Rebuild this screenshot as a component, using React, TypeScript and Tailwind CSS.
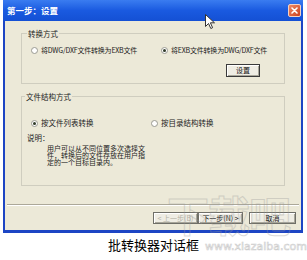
import React from "react";

const cjk = { fontFamily: '"Noto Sans CJK SC", "Noto Sans", sans-serif' };

function Radio({ checked }: { checked?: boolean }) {
  return (
    <span className="flex h-[7px] w-[7px] shrink-0 items-center justify-center rounded-full border border-[#9a9a92] bg-white">
      {checked && <span className="h-[3px] w-[3px] rounded-full bg-[#2f3a28]" />}
    </span>
  );
}

function Btn({ children, w, disabled, bold }: { children: React.ReactNode; w: string; disabled?: boolean; bold?: boolean }) {
  return (
    <div
      className={`flex items-center justify-center whitespace-nowrap border ${bold ? "border-[#3a3a3a]" : "border-[#6f6f68]"} bg-[#efede4] text-[7px] leading-none ${disabled ? "text-[#b4b2a6]" : "text-[#111]"} shadow-[inset_1px_1px_0_#ffffff,inset_-1px_-1px_0_#a8a69a] ${w}`}
    >
      {children}
    </div>
  );
}

export default function App() {
  return (
    <div className="relative h-[260px] w-[307px] overflow-hidden bg-white" style={cjk}>
      {/* Window */}
      <div className="ml-[3px] flex w-[300px] flex-col bg-[#1d45c4]">
        {/* Title bar */}
        <div className="flex h-[21px] items-center justify-between bg-gradient-to-b from-[#3a7cf0] via-[#1a5ae0] to-[#1450d4] pl-[4px] pr-[2px]">
          <span className="text-[8.5px] font-bold leading-none text-white">第一步：设置</span>
          <div className="flex h-[13px] w-[13px] items-center justify-center rounded-[2px] border border-[#f3d2c4] bg-gradient-to-br from-[#f08a66] to-[#c9401c]">
            <svg width="7" height="7" viewBox="0 0 7 7">
              <path d="M1 1 L6 6 M6 1 L1 6" stroke="white" strokeWidth="1.6" strokeLinecap="round" />
            </svg>
          </div>
        </div>
        {/* Client area */}
        <div className="mx-[2px] mb-[3px] flex h-[209px] flex-col bg-[#ECE9D8] text-[#222]">
          {/* Group 1 */}
          <div className="relative ml-[16px] mt-[12px] h-[51px] w-[264px] border border-[#cfcdbf] px-[9px] pt-[11px]">
            <span className="absolute -top-[5px] left-[5px] bg-[#ECE9D8] px-[1px] text-[7.5px] leading-[9px]">转换方式</span>
            <div className="flex h-[10px] items-center whitespace-nowrap text-[7px] leading-none">
              <div className="flex w-[130px] items-center gap-[3px]">
                <Radio />
                <span className="tracking-[-0.2px]">将DWG/DXF文件转换为EXB文件</span>
              </div>
              <div className="flex items-center gap-[3px]">
                <Radio checked />
                <span className="tracking-[-0.2px]">将EXB文件转换为DWG/DXF文件</span>
              </div>
            </div>
            <div className="mt-[9px] flex justify-end pr-[15px]">
              <Btn w="h-[13px] w-[34px]" bold>
                设置
              </Btn>
            </div>
          </div>
          {/* Group 2 */}
          <div className="relative ml-[16px] mt-[12px] h-[90px] w-[264px] border border-[#cfcdbf] pt-[21px]">
            <span className="absolute -top-[5px] left-[3px] bg-[#ECE9D8] px-[1px] text-[7.5px] leading-[9px]">文件结构方式</span>
            <div className="flex h-[10px] items-center whitespace-nowrap pl-[9px] text-[7.5px] leading-none">
              <div className="flex w-[120px] items-center gap-[3px]">
                <Radio checked />
                <span>按文件列表转换</span>
              </div>
              <div className="flex items-center gap-[3px]">
                <Radio />
                <span>按目录结构转换</span>
              </div>
            </div>
            <div className="mt-[5px] pl-[5px] text-[7.5px] leading-[10px]">说明：</div>
            <div className="mt-[2px] whitespace-nowrap pl-[25px] text-[7px] leading-[7px]">
              <div>用户可以从不同位置多次选择文</div>
              <div>件，转换后的文件存放在用户指</div>
              <div>定的一个目标目录内。</div>
            </div>
          </div>
          {/* Separator */}
          <div className="mx-[2px] mt-[18px] h-[2px] border-t border-b border-t-[#aca899] border-b-white" />
          {/* Buttons */}
          <div className="mt-[6px] flex justify-end pr-[5px]">
            <Btn w="h-[12px] w-[45px]" disabled>
              &lt; 上一步(B)
            </Btn>
            <Btn w="h-[12px] w-[45px]">下一步(N) &gt;</Btn>
            <div className="w-[6px]" />
            <Btn w="h-[12px] w-[47px]">取消</Btn>
          </div>
        </div>
      </div>
      {/* Caption */}
      <div className="mt-[4px] text-center text-[13px] leading-[16px] text-black">批转换器对话框</div>

      {/* Watermark */}
      <div
        aria-hidden="true"
        className="pointer-events-none absolute left-[167px] top-[193px] text-[42px] font-bold leading-none tracking-[-1px] text-transparent opacity-35"
        style={{ WebkitTextStroke: "1px #9a9a9a" }}
      >
        下载吧
      </div>
      <div
        aria-hidden="true"
        className="pointer-events-none absolute left-[205px] top-[241px] whitespace-nowrap text-[11px] leading-none text-transparent opacity-50"
        style={{ WebkitTextStroke: "0.6px #9a9a9a", fontFamily: '"DejaVu Sans", sans-serif' }}
      >
        www.xiazaiba.com
      </div>

      {/* Cursor */}
      <svg className="pointer-events-none absolute left-[205px] top-[14px]" width="11" height="16" viewBox="0 0 11 16">
        <path d="M0.5 0.5 L0.5 12.5 L3.5 9.5 L5.8 14.5 L7.6 13.7 L5.4 8.8 L9.5 8.8 Z" fill="white" stroke="#333" strokeWidth="1" strokeLinejoin="round" />
      </svg>
    </div>
  );
}
